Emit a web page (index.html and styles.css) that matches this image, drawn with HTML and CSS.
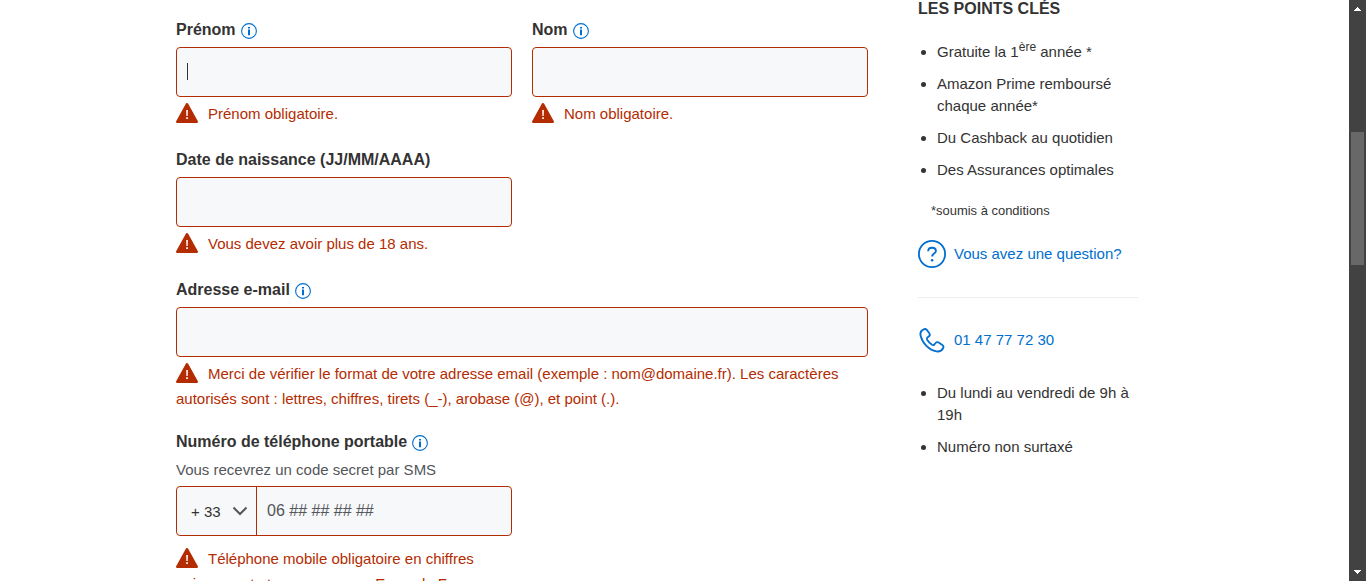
FILE: index.html
```html
<!DOCTYPE html>
<html lang="fr">
<head>
<meta charset="utf-8">
<title>Demande de carte</title>
<link rel="stylesheet" href="styles.css">
</head>
<body>
<svg class="defs" aria-hidden="true">
  <symbol id="info" viewBox="0 0 16 16"><circle cx="8" cy="8" r="7.4" fill="none" stroke="#006fcf" stroke-width="1.1"/><path d="M7 4h2v1.600H7zM7 6.600h2v5.700H7z" fill="#006fcf"/></symbol>
  <symbol id="warn" viewBox="0 0 22 20"><path d="M11 1.200 20.800 18.800H1.200Z" fill="#b42c01" stroke="#b42c01" stroke-width="2.400" stroke-linejoin="round"/><path d="M10.200 7h1.700l-.2 6h-1.300zM10.200 14.300h1.700V16h-1.700z" fill="#fff"/></symbol>
</svg>
<div class="page">
  <main class="form">
    <div class="row">
      <div class="field">
        <label class="label">Prénom<svg class="info"><use href="#info"/></svg></label>
        <div class="input"><span class="caret"></span></div>
        <p class="error"><svg class="warn"><use href="#warn"/></svg>Prénom obligatoire.</p>
      </div>
      <div class="field">
        <label class="label">Nom<svg class="info"><use href="#info"/></svg></label>
        <div class="input"></div>
        <p class="error"><svg class="warn"><use href="#warn"/></svg>Nom obligatoire.</p>
      </div>
    </div>
    <div class="field half">
      <label class="label">Date de naissance (JJ/MM/AAAA)</label>
      <div class="input"></div>
      <p class="error"><svg class="warn"><use href="#warn"/></svg>Vous devez avoir plus de 18 ans.</p>
    </div>
    <div class="field email">
      <label class="label">Adresse e-mail<svg class="info"><use href="#info"/></svg></label>
      <div class="input"></div>
      <p class="error"><svg class="warn"><use href="#warn"/></svg>Merci de vérifier le format de votre adresse email (exemple : nom@domaine.fr). Les caractères autorisés sont : lettres, chiffres, tirets (_-), arobase (@), et point (.).</p>
    </div>
    <div class="field half phone">
      <label class="label">Numéro de téléphone portable<svg class="info"><use href="#info"/></svg></label>
      <p class="hint">Vous recevrez un code secret par SMS</p>
      <div class="input split">
        <div class="prefix"><span>+ 33</span><svg class="chevron" viewBox="0 0 16 10"><path d="M1.500 1.500 8 8l6.500-6.500" fill="none" stroke="#53565a" stroke-width="2"/></svg></div>
        <div class="number">06 ## ## ## ##</div>
      </div>
      <p class="error"><svg class="warn"><use href="#warn"/></svg>Téléphone mobile obligatoire en chiffres uniquement et sans espaces. Exemple France</p>
    </div>
  </main>
  <aside class="aside">
    <h2 class="title">LES POINTS CLÉS</h2>
    <ul class="list">
      <li>Gratuite la 1<sup>ère</sup> année *</li>
      <li>Amazon Prime remboursé chaque année*</li>
      <li>Du Cashback au quotidien</li>
      <li>Des Assurances optimales</li>
    </ul>
    <p class="note">*soumis à conditions</p>
    <a class="link"><svg class="link-icon" viewBox="0 0 28 28"><g fill="none" stroke="#006fcf"><circle cx="14" cy="14" r="13.100" stroke-width="1.800"/><path d="M10.200 11.200c0-2.200 1.600-3.400 3.800-3.400s3.900 1.100 3.900 3.100c0 2.800-3.800 2.500-3.800 5.700" stroke-width="1.900"/></g><circle cx="14.100" cy="20.300" r="1.300" fill="#006fcf"/></svg>Vous avez une question?</a>
    <hr class="rule">
    <a class="link"><svg class="link-icon" viewBox="0 0 28 28"><path transform="translate(.4 .6)" d="M3.500 3.900 5.200 2.800c1.200-.7 2.300-.5 3.200.5l2.500 3.300c.8 1.100.7 2.200-.3 3.100l-1.500 1.200c-.8.7-.9 1.400-.4 2.300 1.200 2 2.900 3.700 5 5 .9.500 1.600.4 2.300-.3l1.200-1.500c.9-1 2-1.100 3.100-.4l3.600 2.500c1.200.8 1.500 1.900.8 3.100-1.400 2.500-3.800 3.700-6.700 3.200C11 23.600 4.200 17.200 2.200 9.200c-.6-2.200-.1-4 1.300-5.300Z" fill="none" stroke="#006fcf" stroke-width="1.800" stroke-linejoin="round"/></svg>01 47 77 72 30</a>
    <ul class="list hours">
      <li>Du lundi au vendredi de 9h à 19h</li>
      <li>Numéro non surtaxé</li>
    </ul>
  </aside>
  <div class="scrollbar">
    <svg class="arrow" viewBox="0 0 7 4" shape-rendering="crispEdges"><path d="M3 0h1v1h1v1h1v1h1v1H0V3h1V2h1V1h1z" fill="#fff"/></svg>
    <div class="thumb"></div>
    <svg class="arrow" viewBox="0 0 7 4" shape-rendering="crispEdges"><path d="M0 0h7v1H6v1H5v1H4v1H3V3H2V2H1V1H0z" fill="#fff"/></svg>
  </div>
</div>
</body>
</html>
```
FILE: styles.css
```css
* { box-sizing: border-box; }
html, body { margin: 0; height: 581px; overflow: hidden; }
body { font: 15px/22px "Liberation Sans", Arial, sans-serif; color: #333; background: #fff; }
p, h2, ul { margin: 0; padding: 0; }
.defs { display: none; }
.page { display: flex; height: 581px; overflow: hidden; }
.form { width: 692px; margin-left: 176px; padding-top: 19px; flex: none; }
.row { display: grid; grid-template-columns: 336px 336px; gap: 20px; }
.field { height: 130px; }
.half { width: 336px; }
.email { height: 152px; }
.label { display: flex; align-items: center; height: 22px; font-size: 16px; font-weight: 700; }
.info { width: 16px; height: 16px; margin: 1px 0 0 5px; }
.input { display: flex; align-items: center; height: 50px; margin-top: 6px; border: 1px solid #b42c01; border-radius: 4px; background: #f7f8f9; }
.caret { width: 1px; height: 17px; margin: 0 0 2px 10px; background: #333; }
.error { margin-top: 4px; line-height: 25px; color: #b42c01; }
.warn { width: 22px; height: 20px; margin-right: 10px; vertical-align: -4px; }
.hint { margin-top: 6px; color: #53565a; }
.phone .input { margin-top: 5px; }
.phone .error { margin-top: 10px; }
.split { align-items: stretch; }
.prefix { display: flex; align-items: center; width: 80px; padding: 1px 0 0 14px; border-right: 1px solid #b42c01; }
.chevron { width: 16px; height: 10px; margin: 0 0 1px 11px; }
.number { padding: 13px 0 0 10px; font-size: 16px; color: #53565a; }
.aside { width: 220px; margin-left: 50px; flex: none; }
.title { margin-top: -2px; font-size: 16px; line-height: 22px; }
.list { margin-top: 21px; padding-left: 19px; }
.list li { margin-bottom: 10px; }
.list sup { font-size: 12px; line-height: 0; }
.note { margin: 20px 0 0 13px; font-size: 12.960px; line-height: 20px; }
.link { display: flex; align-items: center; gap: 8px; height: 28px; margin-top: 19px; color: #006fcf; }
.link-icon { width: 28px; height: 28px; }
.rule { margin: 29px 0 28px; border: 0; border-top: 1px solid #ecedee; }
.hours { margin-top: 28px; }
.scrollbar { display: flex; flex-direction: column; align-items: center; width: 17px; margin-left: auto; padding: 7px 0 7px; background: #424242; }
.arrow { width: 7px; height: 4px; }
.thumb { width: 13px; height: 133px; margin: 121px 0 auto; background: #686868; }
```
